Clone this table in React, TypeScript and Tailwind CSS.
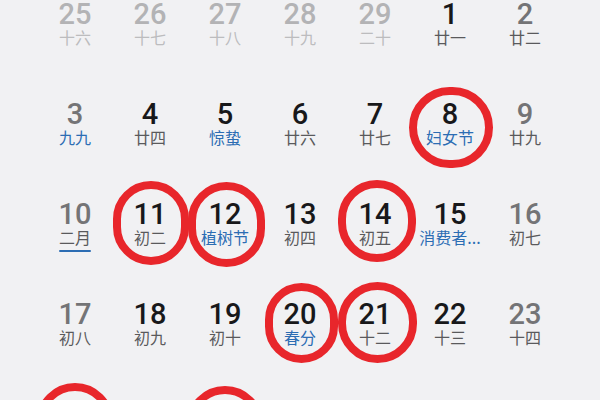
import React from "react";

type Day = {
  n: number;
  lunar: string;
  tone: "prev" | "weekend" | "normal";
  festival?: boolean;
  underline?: boolean;
  ring?: string;
  hidden?: boolean;
};

const p = (n: number, lunar: string): Day => ({ n, lunar, tone: "prev" });
const w = (n: number, lunar: string, extra: Partial<Day> = {}): Day => ({ n, lunar, tone: "weekend", ...extra });
const d = (n: number, lunar: string, extra: Partial<Day> = {}): Day => ({ n, lunar, tone: "normal", ...extra });

const weeks: Day[][] = [
  [p(25, "十六"), p(26, "十七"), p(27, "十八"), p(28, "十九"), p(29, "二十"), d(1, "廿一"), w(2, "廿二")],
  [
    w(3, "九九", { festival: true }),
    d(4, "廿四"),
    d(5, "惊蛰", { festival: true }),
    d(6, "廿六"),
    d(7, "廿七"),
    d(8, "妇女节", { festival: true, ring: "left-[-4px] top-[10px] w-[84px] h-[81px]" }),
    w(9, "廿九"),
  ],
  [
    w(10, "二月", { underline: true }),
    d(11, "初二", { ring: "left-[0px] top-[4px] w-[76px] h-[84px]" }),
    d(12, "植树节", { festival: true, ring: "left-[0px] top-[5px] w-[77px] h-[85px]" }),
    d(13, "初四"),
    d(14, "初五", { ring: "left-[0px] top-[3px] w-[78px] h-[82px]" }),
    d(15, "消费者...", { festival: true }),
    w(16, "初七"),
  ],
  [
    w(17, "初八"),
    d(18, "初九"),
    d(19, "初十"),
    d(20, "春分", { festival: true, ring: "left-[2px] top-[6px] w-[73px] h-[80px]" }),
    d(21, "十二", { ring: "left-[0px] top-[5px] w-[79px] h-[81px]" }),
    d(22, "十三"),
    w(23, "十四"),
  ],
  // last week is below the fold, only the markers peek in
  [
    w(24, "十五", { hidden: true, ring: "left-[-2px] top-[6px] w-[78px] h-[80px]" }),
    d(25, "十六", { hidden: true }),
    d(26, "十七", { hidden: true, ring: "left-[-2px] top-[9px] w-[78px] h-[80px]" }),
    d(27, "十八", { hidden: true }),
    d(28, "十九", { hidden: true }),
    d(29, "二十", { hidden: true }),
    w(30, "廿一", { hidden: true }),
  ],
];

function numberColor(day: Day) {
  if (day.tone === "prev") return "text-[#b3b3b5]";
  if (day.tone === "weekend") return "text-[#747476]";
  return "text-[#18181a]";
}

function lunarColor(day: Day) {
  if (day.festival) return "text-[#2c6db3]";
  if (day.tone === "prev") return "text-[#bcbcbe]";
  return "text-[#5a5a5c]";
}

function DayCell({ day }: { day: Day }) {
  return (
    <div className="relative flex h-[100px] flex-col items-center pt-[23px]">
      {!day.hidden && (
        <>
          <span
            className={`h-[29px] text-[29px] leading-[29px] font-medium font-['Roboto','Noto_Sans',sans-serif] ${numberColor(day)}`}
          >
            {day.n}
          </span>
          <span
            className={`h-[17px] whitespace-nowrap text-[16px] leading-[17px] font-['Noto_Sans_CJK_SC','Noto_Sans',sans-serif] ${lunarColor(day)}`}
          >
            {day.lunar}
          </span>
          {day.underline && <div className="mt-[4px] h-[2px] w-[32px] rounded-full bg-[#2c6db3]" />}
        </>
      )}

      {/* red marker drawn over the date */}
      {day.ring && (
        <div className={`absolute rounded-full border-[8px] border-[#e8262b] ${day.ring}`} />
      )}
    </div>
  );
}

export default function App() {
  return (
    <div className="h-[400px] w-[600px] overflow-hidden bg-[#f1f1f3]">
      <div className="-mt-[23px] grid grid-cols-7 px-[37.5px]">
        {weeks.flat().map((day, i) => (
          <DayCell key={i} day={day} />
        ))}
      </div>
    </div>
  );
}
